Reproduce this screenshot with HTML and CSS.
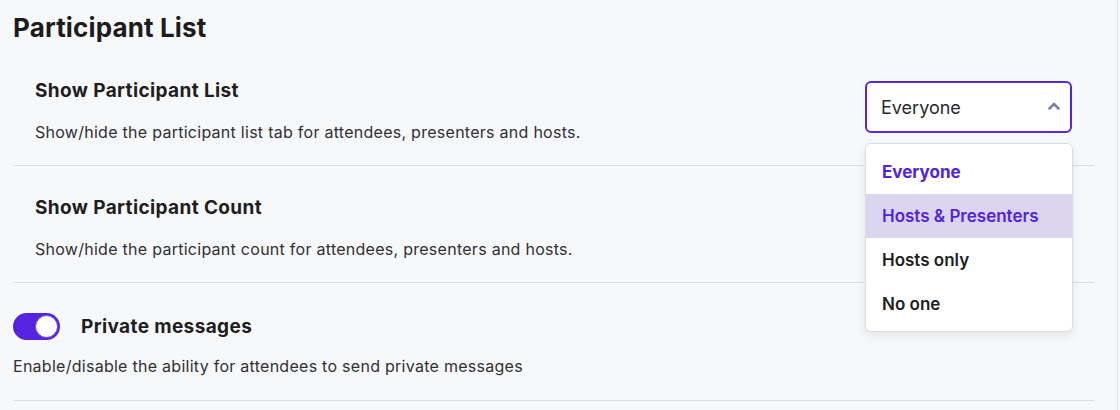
FILE: index.html
```html
<!DOCTYPE html>
<html lang="en">
<head>
    <meta charset="UTF-8">
    <meta name="viewport" content="width=device-width, initial-scale=1.0">
    <title>Participant List</title>
    <link rel="stylesheet" href="styles.css">
</head>
<body>
    <div class="page">
        <h1 class="page-title">Participant List</h1>

        <div class="setting">
            <div class="setting-text">
                <h3>Show Participant List</h3>
                <p>Show/hide the participant list tab for attendees, presenters and hosts.</p>
            </div>

            <div class="select-wrap">
                <div class="select">
                    <span>Everyone</span>
                    <svg class="chevron" width="12" height="8" viewBox="0 0 12 8">
                        <polyline points="1.5,6.5 6,2 10.5,6.5" fill="none" stroke="#7d82a0" stroke-width="2.6" stroke-linecap="round" stroke-linejoin="round"/>
                    </svg>
                </div>

                <ul class="options">
                    <li class="option selected">Everyone</li>
                    <li class="option active">Hosts &amp; Presenters</li>
                    <li class="option">Hosts only</li>
                    <li class="option">No one</li>
                </ul>
            </div>
        </div>

        <div class="setting">
            <div class="setting-text">
                <h3>Show Participant Count</h3>
                <p>Show/hide the participant count for attendees, presenters and hosts.</p>
            </div>
        </div>

        <div class="setting setting-toggle">
            <div class="toggle-row">
                <span class="toggle on"><span class="knob"></span></span>
                <h3>Private messages</h3>
            </div>
            <p>Enable/disable the ability for attendees to send private messages</p>
        </div>
    </div>
</body>
</html>
```

FILE: styles.css
```css
* {
    margin: 0;
    padding: 0;
    box-sizing: border-box;
    font-family: 'Inter', 'Liberation Sans', sans-serif;
}

body {
    background-color: #f7f8fa;
    color: #1e1e22;
}

.page {
    width: 1118px;
    height: 410px;
    padding: 12px 23px 0 13px;
    border-right: 1px solid #e3e4e8;
}

.page-title {
    font-size: 26px;
    line-height: 32px;
    font-weight: 700;
    letter-spacing: 0.15px;
    color: #1c1c20;
    margin-bottom: 5px;
}

.setting {
    display: flex;
    justify-content: space-between;
    align-items: flex-start;
    padding: 30px 22px 21px;
    border-bottom: 1px solid #dcdde1;
}

.setting h3 {
    font-size: 19px;
    line-height: 24px;
    font-weight: 700;
    letter-spacing: 0.38px;
    color: #1e1e22;
    margin-bottom: 17px;
}

.setting p {
    font-size: 16px;
    line-height: 24px;
    letter-spacing: 0.27px;
    color: #303035;
}

.setting-toggle {
    display: block;
    padding: 30px 0 22px;
}

.toggle-row {
    display: flex;
    align-items: center;
    gap: 21px;
    margin-bottom: 14px;
}

.toggle-row h3 {
    margin-bottom: 0;
}

.toggle {
    display: flex;
    align-items: center;
    justify-content: flex-end;
    width: 47px;
    height: 27px;
    padding: 2px;
    border-radius: 14px;
    background: #5424e0;
}

.knob {
    width: 23px;
    height: 23px;
    border-radius: 50%;
    background: #fff;
    border: 1px solid #6a45e6;
}

/* select + open dropdown */
.select-wrap {
    position: relative;
    margin-top: 2px;
}

.select {
    display: flex;
    align-items: center;
    justify-content: space-between;
    width: 207px;
    height: 52px;
    padding: 0 10px 0 14px;
    border: 2px solid #5627e2;
    border-radius: 6px;
    background: #fff;
    font-size: 18px;
    color: #2a2a2e;
}

.chevron {
    margin-top: -2px;
}

.options {
    list-style: none;
    position: absolute;
    top: 62px;
    left: 0;
    width: 208px;
    padding: 6px 0 5px;
    background: #fff;
    border: 1px solid #dcdce0;
    border-radius: 6px;
    box-shadow: 0 4px 12px rgba(0, 0, 0, 0.08);
    z-index: 10;
}

.option {
    height: 44px;
    line-height: 44px;
    padding: 0 16px;
    font-size: 17px;
    font-weight: 600;
    color: #1e1e22;
}

.option.selected {
    font-weight: 700;
    color: #5223df;
}

.option.active {
    background: #dcd5ef;
    color: #5223df;
}
```
